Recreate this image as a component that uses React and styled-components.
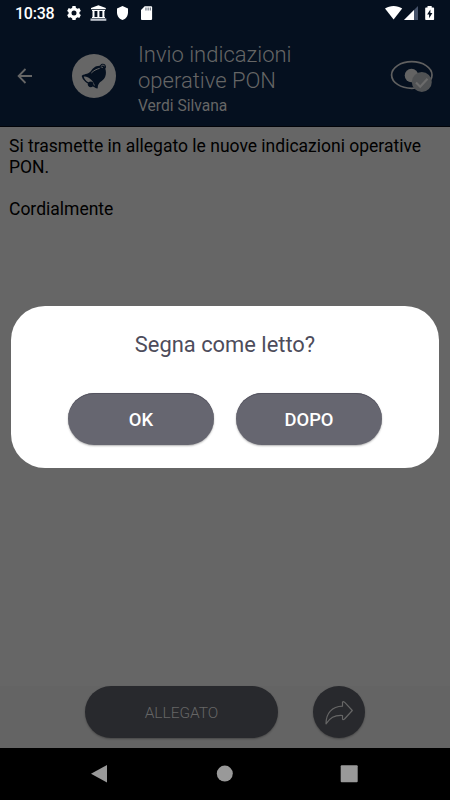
import React, { useState } from "react";
import styled, { createGlobalStyle } from "styled-components";

const GlobalStyle = createGlobalStyle`
  * {
    box-sizing: border-box;
  }
  body {
    margin: 0;
    background-color: #000;
    font-family: Roboto, "Liberation Sans", sans-serif;
  }
  button {
    border: 0;
    padding: 0;
    font-family: inherit;
    cursor: pointer;
  }
  svg {
    display: block;
    flex-shrink: 0;
  }
`

const Screen = styled.div`
  position: relative;
  display: flex;
  flex-direction: column;
  width: 450px;
  height: 800px;
  overflow: hidden;
  background-color: #666;
`

const Header = styled.header`
  height: 127px;
  background-color: #05101f;
  border-bottom: 1px solid #020409;
`

const StatusBar = styled.div`
  display: flex;
  justify-content: space-between;
  height: 27px;
  padding: 0 13px 0 15px;
  color: #fff;
`

const Clock = styled.span`
  width: 51px;
  padding-top: 4px;
  font-size: 16px;
  font-weight: 500;
  line-height: 20px;
  letter-spacing: -0.25px;
`

const StatusGroup = styled.div`
  display: flex;
`

const Toolbar = styled.div`
  display: flex;
  height: 99px;
  padding-left: 17px;
`

const BackBtn = styled.button`
  width: 55px;
  height: 98px;
  background-color: transparent;
`

const Avatar = styled.div`
  margin: 27px 22px 0 0;
`

const Titles = styled.div`
  flex: 1;
  padding-top: 15px;
  color: #666;
`

const Title = styled.h1`
  margin: 0;
  font-size: 22px;
  font-weight: 300;
  line-height: 26px;
`

const Sender = styled.p`
  margin: 0;
  font-size: 15.6px;
  font-weight: 400;
  line-height: 25px;
`

const ReadMark = styled.div`
  width: 60px;
  padding-top: 32px;
`

const Message = styled.main`
  flex: 1;
  padding: 9px;
  color: #000;
  font-size: 17.5px;
  line-height: 21px;
  p {
    margin: 0 0 21px;
  }
`

const Actions = styled.div`
  display: flex;
  gap: 35px;
  height: 62px;
  padding-left: 85px;
  background-color: #646464;
`

const DarkBtn = styled.button`
  display: flex;
  align-items: center;
  justify-content: center;
  width: ${props => props.$width}px;
  height: 52px;
  padding-top: 1px;
  border-radius: 26px;
  background-color: #28292d;
  box-shadow: 0 1px 2px rgba(0, 0, 0, .3);
  color: #666;
  font-size: 15.5px;
  font-weight: 300;
`

const NavBar = styled.nav`
  display: flex;
  justify-content: space-between;
  height: 52px;
  padding: 16px 92px 0 90px;
  background-color: #000;
`

const Overlay = styled.div`
  position: absolute;
  inset: 0;
  display: flex;
  align-items: flex-start;
  justify-content: center;
  padding-top: 306px;
`

const Dialog = styled.div`
  width: 428px;
  height: 161.5px;
  padding-top: 25px;
  border-radius: 34px;
  background-color: #fff;
`

const Question = styled.p`
  margin: 0;
  color: #4d4c5b;
  font-size: 21.9px;
  line-height: 28px;
  text-align: center;
`

const DialogButtons = styled.div`
  display: flex;
  justify-content: center;
  gap: 22px;
  margin-top: 34px;
`

const DialogBtn = styled.button`
  width: 146px;
  height: 52px;
  border-radius: 26px;
  background-color: #666670;
  box-shadow: 0 1px 2px rgba(0, 0, 0, .3), inset 0 1px 0 #555460;
  color: #fff;
  font-size: 18.4px;
  font-weight: 500;
`

const StatusIcons = () => (
  <svg width="90" height="27" viewBox="66 0 90 27" fill="#fff">
    {/* settings */}
    <circle cx="74" cy="13" r="4" fill="none" stroke="#fff" strokeWidth="3" />
    {[0, 60, 120].map(angle => (
      <path key={angle} d="M72.4 6h3.2l.5 3.5h-4.2zM72.4 20h3.2l.5-3.5h-4.2z" transform={`rotate(${angle} 74 13)`} />
    ))}
    {/* bank */}
    <path d="M91 9.2v-1.3l7.4-2.7 7.4 2.7v1.3z" />
    <path d="M92 10h13v1H92zM92.5 11h2v7h-2zM97.4 11h2v7h-2zM102.4 11h2v7h-2zM92 17h13v1H92z" />
    <path d="M90.5 18.5h15.8v2.3H90.5z" fill="#c1c6ce" />
    {/* shield */}
    <path d="M122.5 6l5.5 2.4v4.1c0 3.5-2.3 6.5-5.5 7.6-3.2-1.1-5.5-4.1-5.5-7.6V8.400z" />
    {/* sd card */}
    <path d="M144.700 6.200h6.500c.5 0 .9.400.9.900v12c0 .5-.4.900-.9.900H141.900c-.5 0-.9-.4-.9-.9V10z" />
    <path d="M145.300 7.500h1.300v3h-1.300zM147.500 7.500h1.300v3h-1.300zM149.700 7.500h1.300v3h-1.300z" fill="#78818d" />
  </svg>
)

const SignalIcons = () => (
  <svg width="53" height="27" viewBox="384 0 53 27" fill="#fff">
    <path d="M385 8.500c4.800-3.400 12.400-3.400 17.200 0L393.600 19.500z" />
    <path d="M418 6v14h-14z" fill="#46536a" />
    <path d="M414 10v10h-10z" />
    <path d="M427.500 6h4.200v1.500h1.700c.4 0 .7.300.7.700v11.100c0 .4-.3.700-.7.700h-7.500c-.4 0-.7-.3-.7-.7V8.200c0-.4.3-.7.700-.7h1.600z" />
    <path d="M430.400 9.500l-3.300 5h2v3.700l3.300-5.200h-2z" fill="#05101f" />
  </svg>
)

const BackIcon = () => (
  <svg width="16" height="18" viewBox="0 0 16 18" fill="none" stroke="#666" strokeWidth="1.800">
    <path d="M15 9H2M8.500 2L1.600 9l6.900 7" />
  </svg>
)

const BellIcon = () => (
  <svg width="44" height="44" viewBox="36 27 132 132">
    <circle cx="102" cy="93" r="66" fill="#666" />
    <path d="M65 93C70 86 84 88 91 80C98 71 104 62 119 62L124 57C132 54 139 59 138 67L136 71C141 88 135 101 125 108C117 113 113 119 113 130Q108 131 102 126Q82 116 76 110Q67 104 65 93Z" fill="#05101f" />
    <path d="M71 95C81 91 99 105 105 122Q88 116 79 108Q73 102 71 95Z" fill="#666" />
    <circle cx="92" cy="118" r="8.500" fill="#05101f" />
    <path d="M94 84C101 77 108 73 119 70" fill="none" stroke="#666" strokeWidth="3" />
    <path d="M122 66Q127 65 129 69M124 62L129 60L134 63" fill="none" stroke="#666" strokeWidth="2.500" />
  </svg>
)

const EyeIcon = () => (
  <svg width="44" height="34" viewBox="390 59 44 34">
    <ellipse cx="411.800" cy="75" rx="20.200" ry="13.300" fill="none" stroke="#606060" strokeWidth="1.700" />
    <circle cx="411.500" cy="75.500" r="6.800" fill="#636363" />
    <circle cx="421.800" cy="82" r="10" fill="#505254" />
    <path d="M416 82.500l4.200 4.200 7.300-8" fill="none" stroke="#6b6b6b" strokeWidth="2.200" />
  </svg>
)

const ShareIcon = () => (
  <svg width="30" height="26" viewBox="0 0 30 26" fill="none" stroke="#666" strokeWidth="1.200" strokeLinejoin="round">
    <path d="M2 23.800C2 13 8 6.500 18.500 6.200V2.200Q19 1.200 20.500 2.200L28.300 10.500L20.500 19Q18.500 20.500 18.500 18.500V15.500C10 15 6 18 2 23.800Z" />
  </svg>
)

const App = () => {
  const [isOpen, setIsOpen] = useState(true);
  const closeHandler = () => {
    setIsOpen(false)
  }
  return (
    <>
      <GlobalStyle />
      <Screen>
        <Header>
          <StatusBar>
            <StatusGroup>
              <Clock>10:38</Clock>
              <StatusIcons />
            </StatusGroup>
            <SignalIcons />
          </StatusBar>
          <Toolbar>
            <BackBtn aria-label="Indietro"><BackIcon /></BackBtn>
            <Avatar><BellIcon /></Avatar>
            <Titles>
              <Title>Invio indicazioni<br />operative PON</Title>
              <Sender>Verdi Silvana</Sender>
            </Titles>
            <ReadMark><EyeIcon /></ReadMark>
          </Toolbar>
        </Header>
        <Message>
          <p>Si trasmette in allegato le nuove indicazioni operative PON.</p>
          <p>Cordialmente</p>
        </Message>
        <Actions>
          <DarkBtn $width={193}>ALLEGATO</DarkBtn>
          <DarkBtn $width={52} aria-label="Condividi"><ShareIcon /></DarkBtn>
        </Actions>
        <NavBar>
          <svg width="18" height="20" fill="#999"><path d="M1 9.700L17 1v17.600z" /></svg>
          <svg width="18" height="20" fill="#999"><circle cx="9.800" cy="9.600" r="8" /></svg>
          <svg width="18" height="20" fill="#999"><rect x="0.700" y="1.200" width="17" height="17" rx="1" /></svg>
        </NavBar>
        {isOpen
          ?
          <Overlay>
            <Dialog role="dialog">
              <Question>Segna come letto?</Question>
              <DialogButtons>
                <DialogBtn onClick={closeHandler}>OK</DialogBtn>
                <DialogBtn onClick={closeHandler}>DOPO</DialogBtn>
              </DialogButtons>
            </Dialog>
          </Overlay>
          : null}
      </Screen>
    </>
  )
}

export default App;
